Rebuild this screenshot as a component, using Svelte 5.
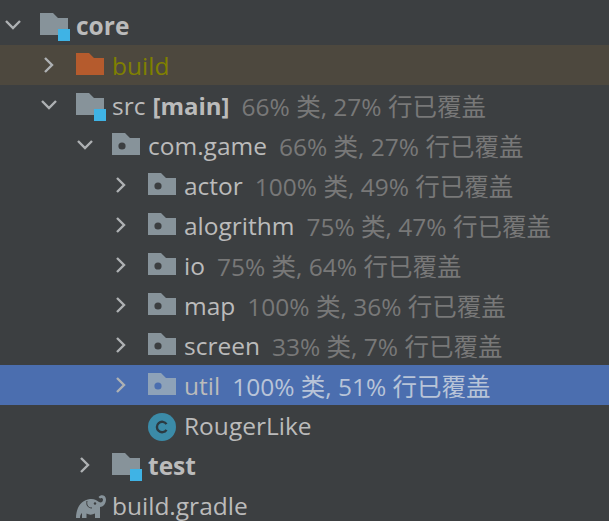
<script>
  const rows = [
    { depth: 0, open: true, icon: 'module', name: 'core', bold: true },
    { depth: 1, open: false, icon: 'excluded', name: 'build', excluded: true },
    { depth: 1, open: true, icon: 'module', name: 'src', tag: '[main]', cov: '66% 类, 27% 行已覆盖' },
    { depth: 2, open: true, icon: 'pkg', name: 'com.game', cov: '66% 类, 27% 行已覆盖' },
    { depth: 3, open: false, icon: 'pkg', name: 'actor', cov: '100% 类, 49% 行已覆盖' },
    { depth: 3, open: false, icon: 'pkg', name: 'alogrithm', cov: '75% 类, 47% 行已覆盖' },
    { depth: 3, open: false, icon: 'pkg', name: 'io', cov: '75% 类, 64% 行已覆盖' },
    { depth: 3, open: false, icon: 'pkg', name: 'map', cov: '100% 类, 36% 行已覆盖' },
    { depth: 3, open: false, icon: 'pkg', name: 'screen', cov: '33% 类, 7% 行已覆盖' },
    { depth: 3, open: false, icon: 'pkg', name: 'util', cov: '100% 类, 51% 行已覆盖', selected: true },
    { depth: 3, leaf: true, icon: 'class', name: 'RougerLike' },
    { depth: 2, open: false, icon: 'module', name: 'test', bold: true },
    { depth: 1, leaf: true, icon: 'gradle', name: 'build.gradle' }
  ];
  const folder = 'M0 0H13L18 5H28V22H0Z';
</script>

<div class="tree">
  {#each rows as r}
    <div class="row d{r.depth}" class:excluded={r.excluded} class:selected={r.selected}>
      <span class="arrow">
        {#if !r.leaf}
          <svg width="20" height="20" viewBox="0 0 20 20">
            <path d={r.open ? 'M3 6L10 13L17 6' : 'M6 3L13 10L6 17'} />
          </svg>
        {/if}
      </span>
      <span class="icon">
        {#if r.icon === 'class'}
          <svg class="glyph" width="28" height="28" viewBox="0 0 28 28">
            <circle cx="14" cy="14" r="14" fill="#3b8ba8" />
            <path d="M18.5 11.2A5.2 5.2 0 1 0 18.5 16.800" fill="none" stroke="#2b3a42" stroke-width="2.400" />
          </svg>
        {:else if r.icon === 'gradle'}
          <svg class="glyph gradle" width="30" height="24" viewBox="0 0 30 24">
            <path class="ele" d="M0 24C0 14 5 6 14 5C18 4.500 21 6 23 8C25 9 27 8 27 5.500C27 4 25 3.500 24 4.500L22.500 3C25 0 30 1 30 5.500C30 10 27 13 24 13V24H19V19.500C16 21 13 21 10.500 19.500V24H6V19C4.500 20 4 22 4 24Z" />
            <path d="M11 7C10 11 12 14 16 14" fill="none" stroke="#3c3f41" stroke-width="1" />
            <circle cx="19" cy="9.500" r="1.200" fill="#3c3f41" />
          </svg>
        {:else}
          <svg class="glyph" width="30" height="28" viewBox="0 0 30 28">
            <path d={folder} fill={r.icon === 'excluded' ? '#b55b2d' : r.selected ? '#8ea2b8' : '#87939a'} />
            {#if r.icon === 'pkg'}
              <circle cx="10" cy="13" r="3.600" fill={r.selected ? '#4b6eaf' : '#3c3f41'} />
            {/if}
            {#if r.icon === 'module'}
              <rect x="18" y="16" width="12" height="12" fill="#3fb3e5" />
            {/if}
          </svg>
        {/if}
      </span>
      <span class="name" class:bold={r.bold}>{r.name}</span>
      {#if r.tag}<span class="tag">{r.tag}</span>{/if}
      {#if r.cov}<span class="cov">{r.cov}</span>{/if}
    </div>
  {/each}
</div>

<style>
  :global(body) {
    margin: 0;
    background: #3c3f41;
  }
  .tree {
    width: 609px;
    height: 521px;
    padding-top: 5px;
    box-sizing: border-box;
    overflow: hidden;
    background: #3c3f41;
    font-family: "Open Sans", "Noto Sans CJK SC", sans-serif;
    font-size: 24.5px;
    color: #bbbbbb;
  }
  .row {
    height: 40px;
    display: flex;
    align-items: center;
    white-space: nowrap;
  }
  .d0 { padding-left: 3px; }
  .d1 { padding-left: 39px; }
  .d2 { padding-left: 75px; }
  .d3 { padding-left: 111px; }
  .excluded {
    background: #4d483e;
  }
  .excluded .name {
    color: #808000;
  }
  .selected {
    background: #4b6eaf;
  }
  .arrow {
    width: 20px;
    height: 20px;
    margin-right: 17px;
    flex: none;
  }
  .arrow svg {
    display: block;
  }
  .arrow path {
    fill: none;
    stroke: #aeb1b3;
    stroke-width: 2.400;
  }
  .icon {
    width: 36px;
    height: 40px;
    flex: none;
    position: relative;
  }
  .glyph {
    position: absolute;
    left: 0;
    top: 8px;
  }
  .gradle {
    top: 9px;
  }
  .ele {
    fill: #87939a;
  }
  .bold, .tag {
    font-weight: 700;
  }
  .tag {
    margin-left: 7px;
    font-size: 24px;
  }
  .cov {
    margin-left: 12px;
    color: #787878;
  }
  .selected .cov {
    color: #b8c4d8;
  }
</style>
